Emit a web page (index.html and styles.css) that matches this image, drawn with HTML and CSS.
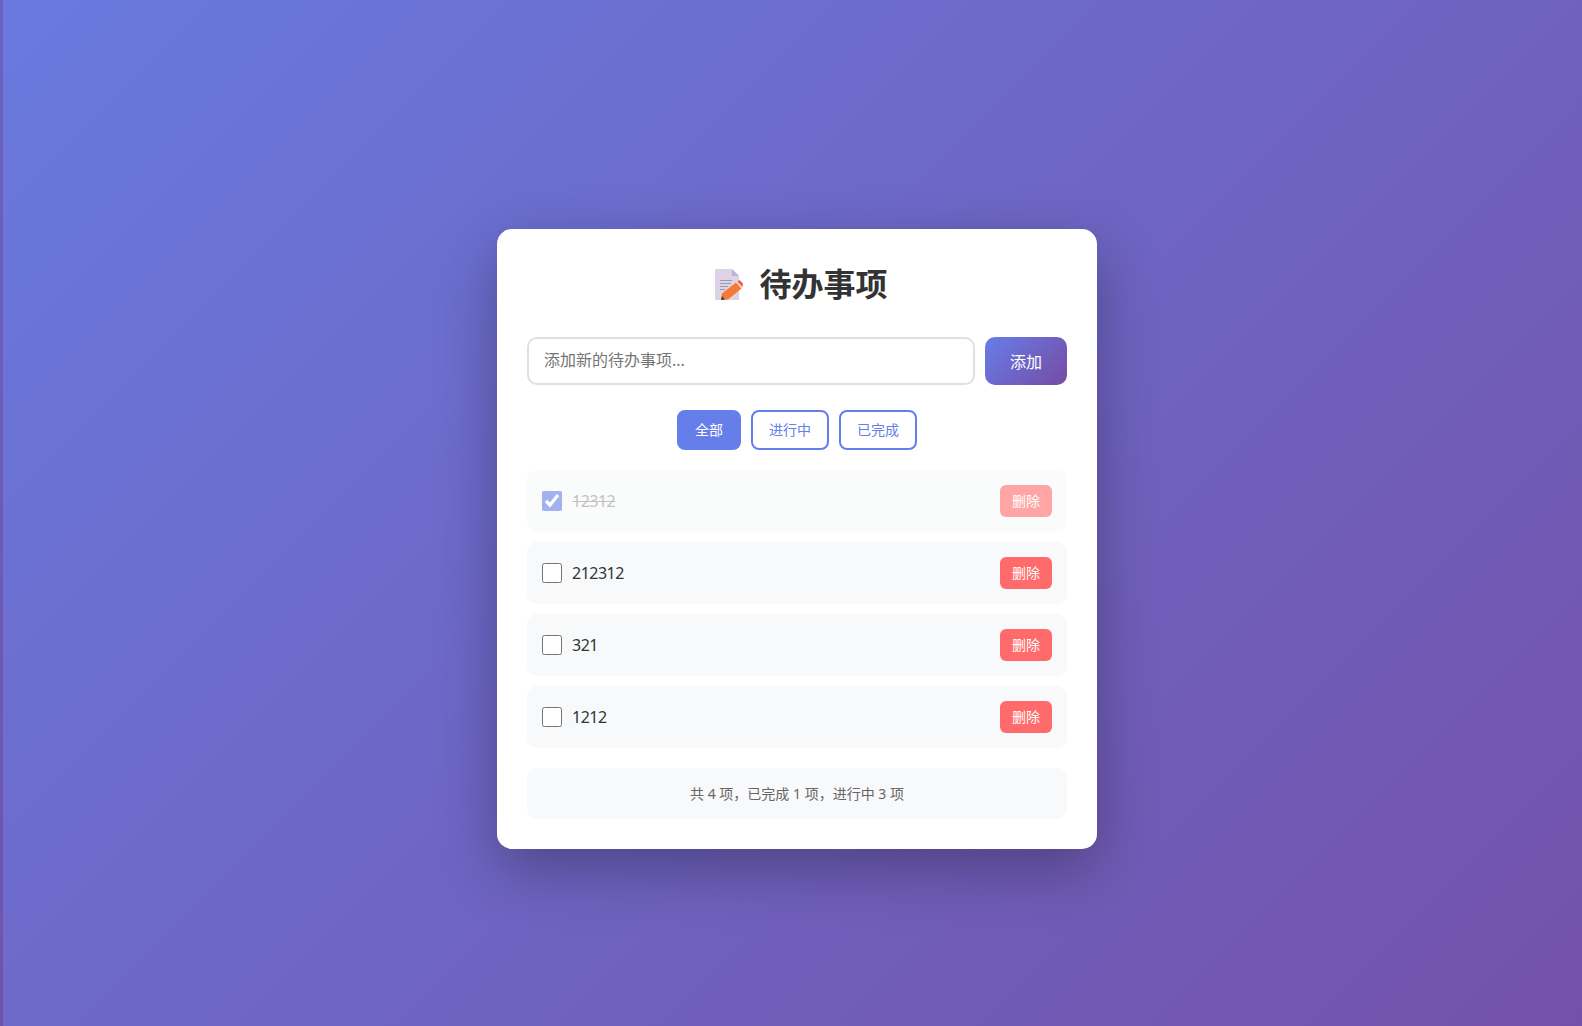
FILE: index.html
```html
<!DOCTYPE html>
<html lang="zh-CN">
	<head>
		<meta charset="utf-8">
		<title>待办事项</title>
		<link rel="stylesheet" href="styles.css">
	</head>
	<body>
		<div class="container">
			<h1 class="title">
				<svg class="title-icon" viewBox="0 0 28 31" width="28" height="31" aria-hidden="true">
					<path d="M0 0H17L24 7V31H0Z" fill="#dcd3e6"/>
					<path d="M17 0L24 7H17Z" fill="#bfb3cc"/>
					<path d="M5 11.500H17M5 14.500H16M5 17.500H13M5 20.500H10" stroke="#a097ab" stroke-width="1.200" fill="none"/>
					<path d="M7 24.500L21 13.500L26.500 19.500L13 30.500L6 31Z" fill="#f47b35"/>
					<path d="M21 13.500L22.500 12.500L27.500 18L26.500 19.500Z" fill="#f6d7c4"/>
					<path d="M22.500 12.500L24.500 11L28 14.500L27.500 18Z" fill="#f4574a"/>
					<path d="M6 31L7 27L10 30.500Z" fill="#4a3d3a"/>
				</svg>
				<span>待办事项</span>
			</h1>
			<div class="add-row">
				<input class="add-input" type="text" placeholder="添加新的待办事项...">
				<button class="add-btn">添加</button>
			</div>
			<div class="filters">
				<button class="filter active">全部</button>
				<button class="filter">进行中</button>
				<button class="filter">已完成</button>
			</div>
			<ul class="list">
				<li class="item done">
					<input type="checkbox" checked>
					<span class="item-text">12312</span>
					<button class="del-btn">删除</button>
				</li>
				<li class="item">
					<input type="checkbox">
					<span class="item-text">212312</span>
					<button class="del-btn">删除</button>
				</li>
				<li class="item">
					<input type="checkbox">
					<span class="item-text">321</span>
					<button class="del-btn">删除</button>
				</li>
				<li class="item">
					<input type="checkbox">
					<span class="item-text">1212</span>
					<button class="del-btn">删除</button>
				</li>
			</ul>
			<div class="stats">共 4 项，已完成 1 项，进行中 3 项</div>
		</div>
	</body>
</html>
```

FILE: styles.css
```css
*{
	margin: 0;
	padding: 0;
	box-sizing: border-box;
}
html{
	margin-left: 3px;
}
body{
	font-family: "Noto Sans", "Noto Sans CJK SC", sans-serif;
	background:
		repeating-conic-gradient(rgba(255,255,255,.02) 0 25%, transparent 0 50%) 0 0 / 2px 2px,
		linear-gradient(135deg, #6778de 0%, #7250a9 100%);
	min-height: 100vh;
	display: flex;
	justify-content: center;
	align-items: center;
	padding: 52px 0 0 9px;
}
.container{
	width: 600px;
	background-color: #fff;
	border-radius: 15px;
	padding: 30px;
	box-shadow: 0 20px 60px rgba(0,0,0,.3);
}
.title{
	display: flex;
	justify-content: center;
	align-items: center;
	gap: 16px;
	font-size: 32px;
	line-height: 46px;
	padding: 2px 0 0 9px;
	color: #333;
	margin-bottom: 30px;
}
.title-icon{
	flex: none;
}
.add-row{
	display: flex;
	gap: 10px;
	margin-bottom: 25px;
}
.add-input{
	flex: 1;
	height: 48px;
	padding: 0 15px 2px;
	border: 2px solid #e0e0e0;
	border-radius: 10px;
	font-family: inherit;
	font-size: 16px;
	outline: none;
}
.add-btn{
	width: 82px;
	height: 48px;
	border: none;
	border-radius: 10px;
	background: linear-gradient(135deg, #667eea 0%, #764ba2 100%);
	color: #fff;
	font-family: inherit;
	font-size: 16px;
}
.filters{
	display: flex;
	justify-content: center;
	gap: 10px;
	margin-bottom: 20px;
}
.filter{
	height: 40px;
	padding: 0 16px 2px;
	border: 2px solid #667eea;
	border-radius: 8px;
	background-color: #fff;
	color: #667eea;
	font-family: inherit;
	font-size: 14px;
}
.filter.active{
	background-color: #667eea;
	color: #fff;
}
.list{
	list-style: none;
}
.item{
	display: flex;
	align-items: center;
	height: 62px;
	padding: 15px;
	margin-bottom: 10px;
	background-color: #f8f9fa;
	border-radius: 10px;
}
.item input{
	width: 20px;
	height: 20px;
	margin-right: 10px;
	accent-color: #667eea;
}
.item-text{
	flex: 1;
	font-size: 16px;
	letter-spacing: -.5px;
	color: #333;
}
.done{
	opacity: .6;
}
.done .item-text{
	text-decoration: line-through;
	color: #999;
}
.del-btn{
	width: 52px;
	height: 32px;
	padding-bottom: 2px;
	border: none;
	border-radius: 6px;
	background-color: #ff6b6b;
	color: #fff;
	font-family: inherit;
	font-size: 14px;
}
.stats{
	margin-top: 20px;
	padding: 15px;
	background-color: #f8f9fa;
	border-radius: 10px;
	text-align: center;
	font-size: 14px;
	line-height: 21px;
	color: #666;
}
```
